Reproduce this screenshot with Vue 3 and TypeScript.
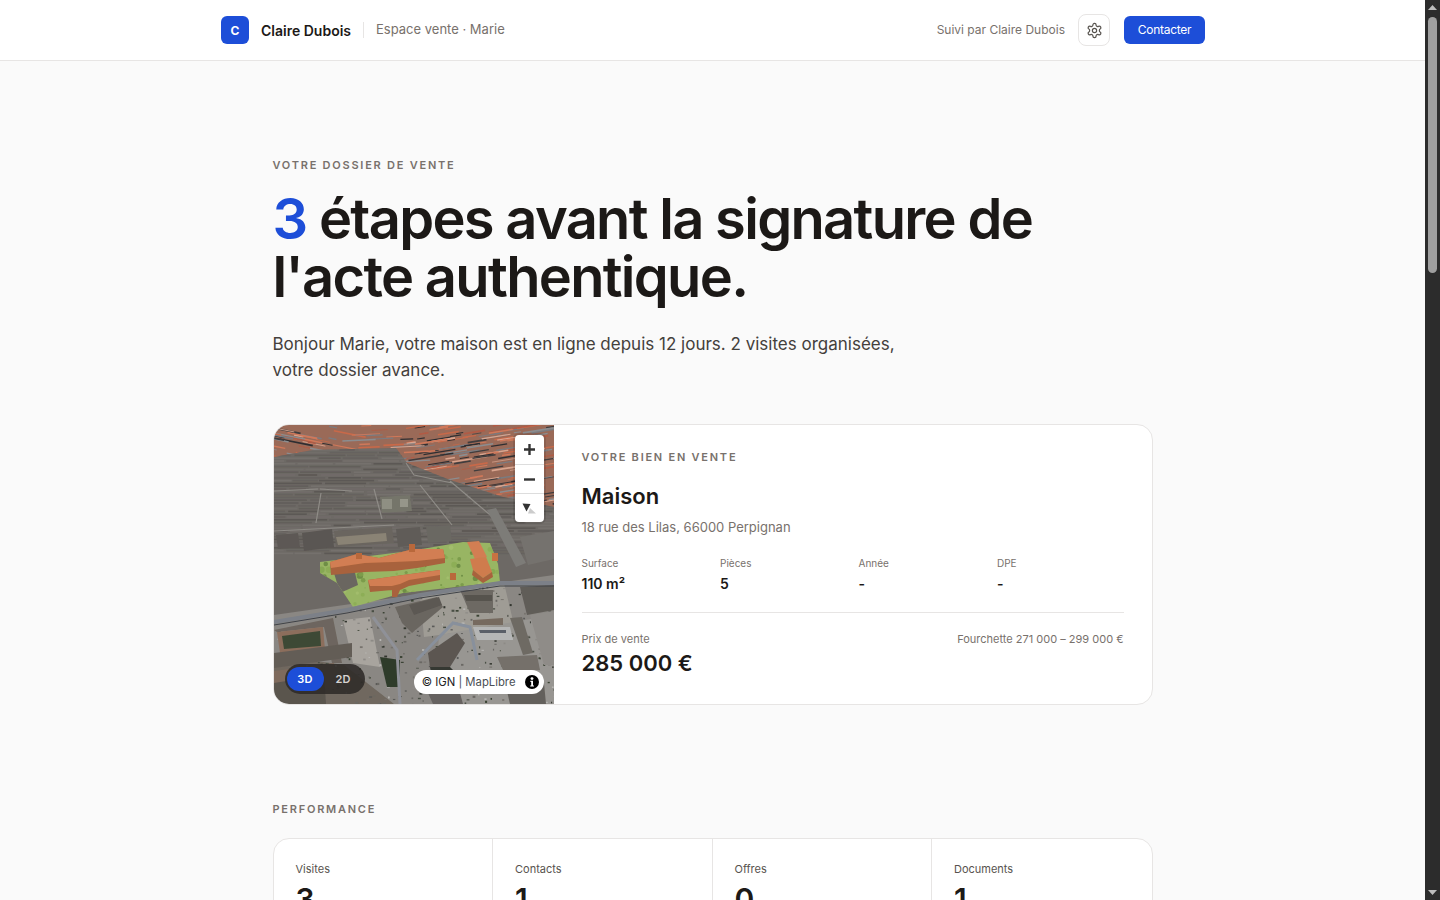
<template>
  <div class="window">
    <div class="page">
      <header class="topbar">
        <div class="topbar_inner">
          <div class="brand">
            <span class="logo">C</span>
            <span class="brand_name">Claire Dubois</span>
            <span class="brand_sep"></span>
            <span class="brand_sub">Espace vente · Marie</span>
          </div>
          <div class="actions">
            <span class="followed">Suivi par Claire Dubois</span>
            <button class="gear" aria-label="Réglages">
              <svg width="17" height="17" viewBox="0 0 24 24" fill="none" stroke="#57534e" stroke-width="1.7" stroke-linecap="round" stroke-linejoin="round">
                <path d="M12.22 2h-.44a2 2 0 0 0-2 2v.18a2 2 0 0 1-1 1.73l-.43.25a2 2 0 0 1-2 0l-.15-.08a2 2 0 0 0-2.73.73l-.22.38a2 2 0 0 0 .73 2.73l.15.1a2 2 0 0 1 1 1.72v.51a2 2 0 0 1-1 1.74l-.15.09a2 2 0 0 0-.73 2.73l.22.38a2 2 0 0 0 2.73.73l.15-.08a2 2 0 0 1 2 0l.43.25a2 2 0 0 1 1 1.73V20a2 2 0 0 0 2 2h.44a2 2 0 0 0 2-2v-.18a2 2 0 0 1 1-1.73l.43-.25a2 2 0 0 1 2 0l.15.08a2 2 0 0 0 2.73-.73l.22-.39a2 2 0 0 0-.73-2.73l-.15-.08a2 2 0 0 1-1-1.74v-.5a2 2 0 0 1 1-1.74l.15-.09a2 2 0 0 0 .73-2.73l-.22-.38a2 2 0 0 0-2.73-.73l-.15.08a2 2 0 0 1-2 0l-.43-.25a2 2 0 0 1-1-1.73V4a2 2 0 0 0-2-2z"/>
                <circle cx="12" cy="12" r="3"/>
              </svg>
            </button>
            <button class="contact">Contacter</button>
          </div>
        </div>
      </header>

      <main class="content">
        <p class="eyebrow">VOTRE DOSSIER DE VENTE</p>
        <h1 class="headline"><span class="accent">3</span> étapes avant la signature de<br>l'acte authentique.</h1>
        <p class="intro">Bonjour Marie, votre maison est en ligne depuis 12 jours. 2 visites organisées,<br>votre dossier avance.</p>

        <section class="property">
          <div class="map">
            <svg class="map_svg" width="280" height="279" viewBox="0 0 280 279">
              <defs>
                <filter id="soft"><feGaussianBlur stdDeviation=".5"/></filter>
                <clipPath id="grayZone"><polygon :points="grayZone"/></clipPath>
                <clipPath id="lowZone"><polygon points="0,197 73,185 146,170 226,158 280,158 280,279 0,279"/></clipPath>
                <clipPath id="siteZone"><polygon :points="siteZone"/></clipPath>
              </defs>
              <g filter="url(#soft)">
                <rect width="280" height="279" fill="#9a6a58"/>
                <path v-for="(l, i) in roofLines" :key="'r' + i" :d="l.d" :stroke="l.c" :stroke-width="l.w" fill="none"/>

                <polygon :points="grayZone" fill="#6d6965"/>
                <g clip-path="url(#grayZone)">
                  <rect v-for="(s, i) in slabs" :key="'s' + i" :x="s.x" :y="s.y" :width="s.w" :height="s.h" :fill="s.c"/>
                  <path d="M47,68 L42,98 M46,64 L78,66 M100,64 L108,94 M146,60 L178,100 M176,56 L228,100 M0,106 L120,100 M0,66 L44,64 M132,38 L140,50 L178,58" stroke="#8f8c87" stroke-width="1.2" fill="none"/>
                  <polygon points="213,85 222,83 252,138 242,142" fill="#7d7b78"/>
                  <polygon points="106,72 136,70 138,86 108,88" fill="#75746b"/>
                  <polygon points="108,74 118,74 118,84 108,84" fill="#8f8f83"/>
                  <polygon points="126,74 134,74 134,82 126,82" fill="#96968a"/>
                  <polygon points="2,110 24,108 26,122 4,124" fill="#5d5955"/>
                  <polygon points="28,108 58,104 60,122 30,126" fill="#5a5652"/>
                  <polygon points="60,106 118,102 120,118 62,122" fill="#6a655f"/>
                  <polygon points="62,112 112,108 113,116 64,120" fill="#8a8374"/>
                  <polygon points="122,104 146,102 148,120 124,122" fill="#605c58"/>
                  <polygon points="152,102 176,100 178,116 154,118" fill="#6a6762"/>
                  <polygon points="246,112 280,106 280,134 254,140" fill="#75726e"/>
                </g>

                <polygon points="0,190 280,150 280,279 0,279" fill="#8a8783"/>
                <g clip-path="url(#lowZone)">
                  <polygon v-for="(s, i) in lowShapes" :key="'l' + i" :points="s.p" :fill="s.f"/>
                  <rect v-for="(d, i) in speckles" :key="'d' + i" :x="d.x" :y="d.y" :width="d.w" :height="d.h" :fill="d.c"/>
                  <polygon v-for="(s, i) in overShapes" :key="'o' + i" :points="s.p" :fill="s.f"/>
                  <path d="M143,235 L179,198 L196,202 L203,235" stroke="#88909c" stroke-width="3" fill="none"/>
                  <path d="M99,192 L123,225 L126,279" stroke="#8f9198" stroke-width="3" fill="none"/>
                </g>

                <polygon :points="siteZone" fill="#98b564"/>
                <g clip-path="url(#siteZone)">
                  <circle v-for="(d, i) in siteDots" :key="'g' + i" :cx="d.x" :cy="d.y" :r="d.r" :fill="d.c"/>
                  <polygon points="60,148 80,144 84,160 66,168" fill="#6a6660"/>
                </g>
                <path d="M0,197 L73,185 L146,170 L226,158 L280,158" stroke="#7b8088" stroke-width="4" fill="none"/>
                <path d="M0,200 L73,188 L146,173 L226,161 L280,161" stroke="#3f4248" stroke-width="1" fill="none"/>

                <polygon v-for="(s, i) in orange" :key="'b' + i" :points="s.p" :fill="s.f"/>
              </g>
            </svg>

            <div class="map_controls">
              <button class="ctrl">
                <svg width="13" height="13" viewBox="0 0 13 13"><path d="M5.3 1h2.4v4.3H12v2.4H7.7V12H5.3V7.7H1V5.3h4.3z" fill="#333"/></svg>
              </button>
              <button class="ctrl">
                <svg width="13" height="13" viewBox="0 0 13 13"><rect x="1" y="5.3" width="11" height="2.4" fill="#333"/></svg>
              </button>
              <button class="ctrl">
                <svg width="16" height="16" viewBox="0 0 16 16"><polygon points="1.5,3.5 9.5,4 5.5,11.5" fill="#333"/><polygon points="9,8 15,13.5 7,13.5" fill="#ccc"/></svg>
              </button>
            </div>

            <div class="view_toggle">
              <span class="view_on">3D</span>
              <span class="view_off">2D</span>
            </div>

            <div class="attribution">
              <span class="attr_text"><span class="attr_copy">© IGN</span> | MapLibre</span>
              <svg width="14" height="14" viewBox="0 0 14 14"><circle cx="7" cy="7" r="7" fill="#000"/><circle cx="7" cy="3.6" r="1.4" fill="#fff"/><path d="M5.4 5.8h2.6v4.6h1v1.2H5.2v-1.2h1V7H5.4z" fill="#fff"/></svg>
            </div>
          </div>

          <div class="details">
            <p class="eyebrow">VOTRE BIEN EN VENTE</p>
            <h2 class="type">Maison</h2>
            <p class="address">18 rue des Lilas, 66000 Perpignan</p>
            <div class="specs">
              <div v-for="s in specs" :key="s.label" class="spec">
                <span class="spec_label">{{ s.label }}</span>
                <span class="spec_value">{{ s.value }}</span>
              </div>
            </div>
            <div class="price_row">
              <div class="price_col">
                <span class="price_label">Prix de vente</span>
                <span class="price">285 000 €</span>
              </div>
              <span class="range">Fourchette 271 000 – 299 000 €</span>
            </div>
          </div>
        </section>

        <p class="eyebrow perf">PERFORMANCE</p>
        <section class="stats">
          <div v-for="s in stats" :key="s.label" class="stat">
            <span class="stat_label">{{ s.label }}</span>
            <span class="stat_value">{{ s.value }}</span>
          </div>
        </section>
      </main>
    </div>

    <aside class="scrollbar">
      <svg width="15" height="15" viewBox="0 0 15 15"><polygon points="7.5,5 12,10 3,10" fill="#bdbdbd"/></svg>
      <div class="scroll_track"><div class="scroll_thumb"></div></div>
      <svg width="15" height="15" viewBox="0 0 15 15"><polygon points="3,5 12,5 7.5,10" fill="#bdbdbd"/></svg>
    </aside>
  </div>
</template>

<script setup lang="ts">
const specs = [
  { label: 'Surface', value: '110 m²' },
  { label: 'Pièces', value: '5' },
  { label: 'Année', value: '-' },
  { label: 'DPE', value: '-' }
]

const stats = [
  { label: 'Visites', value: '3' },
  { label: 'Contacts', value: '1' },
  { label: 'Offres', value: '0' },
  { label: 'Documents', value: '1' }
]

// petit generateur pour la texture de la vue aerienne
let seed = 11
const rnd = () => {
  seed = (seed * 16807) % 2147483647
  return seed / 2147483647
}
const pick = (list: string[]) => list[Math.floor(rnd() * list.length)]

const grayZone = '0,32 39,25 122,23 133,38 176,55 229,72 280,82 280,170 0,200'
const siteZone = '46,137 136,126 189,117 216,118 224,139 226,157 129,168 79,182 63,158 46,148'

const roofLines: { d: string; c: string; w: number }[] = []
for (let i = 0; i < 320; i++) {
  const x = rnd() * 300 - 20
  const y = rnd() * 80
  const len = 6 + rnd() * 30
  const slope = x > 130 ? -0.16 : x > 60 ? -0.05 : 0.2
  roofLines.push({
    d: `M${x},${y} L${x + len},${y + len * slope}`,
    c: pick(['#c8694a', '#d0785a', '#3f3c3e', '#8b8d90', '#b25a44', '#2f2e31', '#d9a58f', '#7a7b80']),
    w: 0.7 + rnd() * 1.1
  })
}

const slabs: { x: number; y: number; w: number; h: number; c: string }[] = []
for (let y = 24; y < 128; y += 2.8) {
  let x = -10 + rnd() * 10
  while (x < 280) {
    const w = 14 + rnd() * 46
    slabs.push({ x, y, w, h: 1.6, c: pick(['#625e5a', '#66625e', '#716d69', '#5c5854', '#75716d']) })
    x += w + 1 + rnd() * 3
  }
}

const lowShapes = [
  { p: '69,195 96,192 106,242 79,238', f: '#a8a49e' },
  { p: '146,170 230,158 240,200 150,212', f: '#9f9c95' },
  { p: '165,210 280,190 280,279 160,279', f: '#989692' },
  { p: '0,230 70,240 120,279 0,279', f: '#6f675e' }
]

const overShapes = [
  { p: '0,205 59,193 68,238 58,238 50,202 3,207', f: '#6d655e' },
  { p: '3,207 49,202 51,225 6,228', f: '#8c6e5c' },
  { p: '8,211 46,206 47,221 10,224', f: '#3d4a36' },
  { p: '0,228 78,218 78,232 0,243', f: '#635d57' },
  { p: '0,246 60,238 62,262 0,270', f: '#7e6a5c' },
  { p: '0,258 50,250 52,279 0,279', f: '#5a544e' },
  { p: '121,182 163,172 169,182 138,208 128,198', f: '#6b6660' },
  { p: '135,180 165,172 168,180 140,190', f: '#5b5853' },
  { p: '186,165 219,165 219,188 196,188', f: '#6d6964' },
  { p: '190,170 218,170 218,176 192,176', f: '#56524e' },
  { p: '246,162 280,160 280,185 253,190', f: '#615d58' },
  { p: '199,195 229,193 229,200 199,200', f: '#766a5f' },
  { p: '199,202 236,202 239,215 203,215', f: '#b5b6b6' },
  { p: '205,205 232,205 232,208 206,208', f: '#5a5f68' },
  { p: '236,193 248,192 259,228 249,230', f: '#6e6a64' },
  { p: '223,232 263,230 266,245 229,245', f: '#74706a' },
  { p: '154,228 183,208 191,218 176,242 156,242', f: '#5b5651' },
  { p: '156,242 176,242 190,256 160,262', f: '#343733' },
  { p: '106,232 126,235 126,262 113,262', f: '#2f3b2b' },
  { p: '154,268 186,268 189,279 159,279', f: '#666260' },
  { p: '232,262 270,258 272,279 236,279', f: '#64605b' },
  { p: '256,190 280,186 280,240 270,240', f: '#8f8c88' }
]

const speckles: { x: number; y: number; w: number; h: number; c: string }[] = []
for (let i = 0; i < 420; i++) {
  speckles.push({
    x: rnd() * 280,
    y: 160 + rnd() * 119,
    w: 0.8 + rnd() * 2.2,
    h: 0.8 + rnd() * 1.4,
    c: pick(['#3a4233', '#4a4f45', '#b8b7b4', '#5a5a58', '#33362f', '#77736e', '#8d8a86', '#6a6864'])
  })
}

const siteDots: { x: number; y: number; r: number; c: string }[] = []
for (let i = 0; i < 110; i++) {
  siteDots.push({
    x: 46 + rnd() * 182,
    y: 116 + rnd() * 66,
    r: 0.7 + rnd() * 2.6,
    c: pick(['#86a853', '#a2bd6c', '#7b9c4c', '#8dae57', '#6e8e45'])
  })
}

const orange = [
  { p: '56,137 83,129 105,133 139,124 169,124 171,133 171,138 143,143 120,146 91,147 57,150', f: '#a8623c' },
  { p: '56,137 83,129 105,133 139,124 169,124 171,133 143,136 120,137 91,138 57,143', f: '#d27e52' },
  { p: '135,119 141,119 141,127 135,127', f: '#b9683a' },
  { p: '82,128 88,128 88,134 82,134', f: '#b9683a' },
  { p: '94,155 129,150 166,145 166,155 135,161 126,165 123,172 118,172 118,165 96,167', f: '#a8623c' },
  { p: '94,155 129,150 166,145 166,150 135,155 126,159 118,161 96,161', f: '#d27e52' },
  { p: '176,148 182,148 182,155 176,155', f: '#b9683a' },
  { p: '193,117 205,116 213,132 201,134', f: '#d27e52' },
  { p: '196,134 212,132 218,147 209,153 199,145', f: '#cf7b4e' },
  { p: '199,145 209,153 218,147 219,152 209,158 198,150', f: '#a8623c' },
  { p: '218,128 224,128 224,136 218,136', f: '#c87242' }
]
</script>

<style scoped>
.window {
  display: flex;
  width: 1440px;
  height: 900px;
  overflow: hidden;
  font-family: Inter, "Liberation Sans", sans-serif;
  color: #1c1917;
  background: #fafafa;
}

.page {
  flex: 1;
  min-width: 0;
  overflow: hidden;
}

.topbar {
  height: 61px;
  box-sizing: border-box;
  background: #fff;
  border-bottom: 1px solid #e7e5e4;
}

.topbar_inner {
  display: flex;
  align-items: center;
  justify-content: space-between;
  width: 984px;
  height: 60px;
  margin: 0 auto;
  padding-left: 1px;
}

.brand,
.actions {
  display: flex;
  align-items: center;
}

.logo {
  display: flex;
  align-items: center;
  justify-content: center;
  width: 28px;
  height: 28px;
  border-radius: 6px;
  background: #1d4ed8;
  color: #fff;
  font-size: 12px;
  font-weight: 700;
}

.brand_name {
  margin-left: 12px;
  font-size: 14px;
  font-weight: 600;
}

.brand_sep {
  width: 1px;
  height: 16px;
  margin: 0 12px;
  background: #e7e5e4;
}

.brand_sub {
  margin-bottom: 2px;
  font-size: 13px;
  color: #78716c;
}

.followed {
  margin-bottom: 2px;
  font-size: 12px;
  color: #78716c;
}

.gear {
  display: flex;
  align-items: center;
  justify-content: center;
  width: 32px;
  height: 32px;
  margin: 0 14px 0 13px;
  padding: 0;
  background: #fff;
  border: 1px solid #e7e5e4;
  border-radius: 8px;
}

.contact {
  width: 81px;
  height: 28px;
  padding: 0 0 1px;
  background: #1d4ed8;
  color: #fff;
  border: 0;
  border-radius: 6px;
  font-family: inherit;
  font-size: 12px;
  font-weight: 400;
  letter-spacing: -.3px;
}

.content {
  width: 880px;
  margin: 0 auto;
  padding-top: 98px;
}

.eyebrow {
  margin: 0;
  font-size: 11px;
  line-height: 13px;
  font-weight: 600;
  letter-spacing: .16em;
  color: #78716c;
}

.headline {
  margin: 18px 0 0;
  font-size: 56px;
  line-height: 58px;
  font-weight: 600;
  letter-spacing: -.03em;
}

.accent {
  color: #1d4ed8;
}

.intro {
  margin: 25px 0 0;
  font-size: 17px;
  line-height: 26px;
  color: #44403c;
}

.property {
  display: flex;
  height: 281px;
  box-sizing: border-box;
  margin-top: 41px;
  background: #fff;
  border: 1px solid #e7e5e4;
  border-radius: 16px;
  overflow: hidden;
}

.map {
  position: relative;
  flex: 0 0 280px;
  height: 279px;
  overflow: hidden;
}

.map_svg {
  display: block;
}

.map_controls {
  position: absolute;
  top: 10px;
  right: 10px;
  display: flex;
  flex-direction: column;
  width: 29px;
  background: #fff;
  border-radius: 4px;
  box-shadow: 0 0 0 2px rgba(0, 0, 0, .1);
}

.ctrl {
  display: flex;
  align-items: center;
  justify-content: center;
  height: 29px;
  padding: 0;
  background: none;
  border: 0;
  border-top: 1px solid #ddd;
}

.ctrl:first-child {
  border-top: 0;
}

.view_toggle {
  position: absolute;
  left: 11px;
  bottom: 10px;
  display: flex;
  padding: 3px 2px;
  background: rgba(45, 42, 40, .88);
  border-radius: 15px;
}

.view_on,
.view_off {
  display: flex;
  align-items: center;
  justify-content: center;
  width: 37px;
  height: 24px;
  border-radius: 12px;
  font-size: 11px;
  font-weight: 600;
  letter-spacing: .02em;
}

.view_off {
  width: 39px;
  color: #d6d3d1;
}

.view_on {
  background: #1d4ed8;
  color: #fff;
}

.attribution {
  position: absolute;
  right: 10px;
  bottom: 10px;
  display: flex;
  align-items: center;
  gap: 9px;
  height: 24px;
  padding: 0 5px 0 8px;
  background: #fff;
  border-radius: 12px;
}

.attr_text {
  font-size: 11.3px;
  color: #4b4f55;
}

.attr_copy {
  color: #222;
}

.details {
  flex: 1;
  min-width: 0;
  padding: 26px 28px 0;
}

.type {
  margin: 18px 0 0;
  font-size: 22px;
  line-height: 28px;
  font-weight: 600;
}

.address {
  margin: 8px 0 0;
  font-size: 13px;
  line-height: 18px;
  color: #78716c;
}

.specs {
  display: grid;
  grid-template-columns: repeat(4, 1fr);
  gap: 12px;
  margin-top: 20px;
  padding-bottom: 18px;
  border-bottom: 1px solid #e7e5e4;
}

.spec,
.price_col {
  display: flex;
  flex-direction: column;
}

.spec_label {
  font-size: 10px;
  line-height: 14px;
  color: #78716c;
}

.spec_value {
  margin-top: 4px;
  font-size: 14px;
  line-height: 20px;
  font-weight: 600;
}

.price_row {
  display: flex;
  align-items: flex-start;
  justify-content: space-between;
  margin-top: 19px;
}

.price_label {
  font-size: 11px;
  line-height: 14px;
  color: #78716c;
}

.price {
  margin-top: 3px;
  font-size: 22px;
  line-height: 28px;
  font-weight: 600;
}

.range {
  font-size: 11px;
  line-height: 14px;
  color: #78716c;
}

.perf {
  margin-top: 98px;
}

.stats {
  display: grid;
  grid-template-columns: repeat(4, 1fr);
  margin-top: 22px;
  background: #fff;
  border: 1px solid #e7e5e4;
  border-radius: 16px;
}

.stat {
  display: flex;
  flex-direction: column;
  padding: 22px;
  border-right: 1px solid #e7e5e4;
}

.stat:last-child {
  border-right: 0;
}

.stat_label {
  font-size: 11px;
  line-height: 16px;
  color: #57534e;
}

.stat_value {
  margin-top: 5px;
  font-size: 30px;
  line-height: 34px;
  font-weight: 600;
}

.scrollbar {
  display: flex;
  flex-direction: column;
  flex: 0 0 15px;
  height: 900px;
  background: #2c2c2c;
}

.scroll_track {
  flex: 1;
  padding: 2px 3px;
}

.scroll_thumb {
  width: 9px;
  height: 256px;
  background: #9f9f9f;
  border-radius: 5px;
}
</style>

<style>
html, body {
  margin: 0;
  overflow: hidden;
}
</style>
